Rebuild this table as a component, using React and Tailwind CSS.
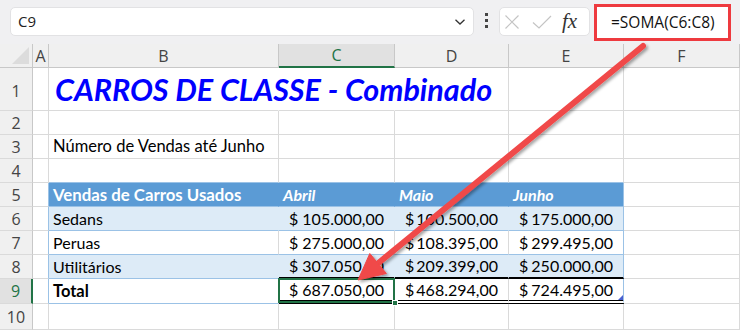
import React from "react";

const WA = "w-[16px]";
const WB = "w-[230px]";
const WC = "w-[116px]";
const WD = "w-[114px]";
const WE = "w-[115px]";
const WF = "w-[116px]";

function RowHead({ num, sel, tall }) {
  return (
    <div
      className={`w-[33px] shrink-0 h-full flex justify-center border-b border-[#dadada] font-['Open_Sans',sans-serif] text-[16px] ${
        tall ? "items-end pb-[7px]" : "items-center"
      } ${
        sel
          ? "bg-[#e1e1e1] text-[#217346] border-r-2 border-r-[#217346]"
          : "bg-[#f0f0f0] text-[#444] border-r border-r-[#c8c8c8]"
      }`}
    >
      {num}
    </div>
  );
}

function Money({ v, cls }) {
  return (
    <div className={`flex items-center justify-between pl-[10px] pr-[10px] h-full ${cls || ""}`}>
      <span>$</span>
      <span>{v}</span>
    </div>
  );
}

const cell = "shrink-0 h-full border-r border-b";

export default function App() {
  return (
    <div className="w-[740px] h-[330px] overflow-hidden relative bg-white font-['Lato',sans-serif] text-[16px] text-black">
      {/* toolbar */}
      <div className="h-[44px] bg-[#f0f0f2] flex items-start">
        <div className="ml-[10px] mt-[7px] w-[464px] h-[29px] bg-white rounded-[5px] border border-[#e2e2e4] flex items-center justify-between pl-[7px] pr-[7px] font-['Open_Sans',sans-serif] text-[15px] text-[#222]">
          <span>C9</span>
          <svg width="12" height="8" viewBox="0 0 12 8" fill="none" stroke="#333" strokeWidth="1.3">
            <path d="M1.5 1.8 L6 6 L10.5 1.8" />
          </svg>
        </div>
        <div className="ml-[11px] mt-[13px] flex flex-col gap-[3px]">
          <div className="w-[3px] h-[3px] bg-[#444]" />
          <div className="w-[3px] h-[3px] bg-[#444]" />
          <div className="w-[3px] h-[3px] bg-[#444]" />
        </div>
        <div className="ml-[11px] mt-[7px] w-[91px] h-[29px] bg-white rounded-[5px] border border-[#e2e2e4] flex items-center">
          <svg className="ml-[4px]" width="16" height="16" viewBox="0 0 16 16" fill="none" stroke="#c4c4c4" strokeWidth="1.2">
            <path d="M1.5 1.5 L14.5 14.5 M14.5 1.5 L1.5 14.5" />
          </svg>
          <svg className="ml-[12px]" width="20" height="16" viewBox="0 0 20 16" fill="none" stroke="#c4c4c4" strokeWidth="1.2">
            <path d="M1 8.5 L7 14 L19 2" />
          </svg>
          <span className="ml-[10px] font-['Liberation_Serif',serif] italic text-[21px] leading-none text-[#333]">fx</span>
        </div>
        <div className="ml-[4px] mt-[4px] w-[137px] h-[37px] border-[3px] border-[#ee3a3f] bg-white flex items-center pl-[14px] font-['Open_Sans',sans-serif] text-[15.5px] text-[#111]">
          =SOMA(C6:C8)
        </div>
      </div>

      {/* column header */}
      <div className="flex h-[24px] bg-[#f0f0f0] font-['Open_Sans',sans-serif] text-[16px] text-[#444]">
        <div className="w-[33px] shrink-0 h-full border-r border-b border-[#c8c8c8] flex items-end justify-end pr-[3px] pb-[3px]">
          <svg width="17" height="17" viewBox="0 0 17 17">
            <polygon points="17,0 17,17 0,17" fill="#dcdcdc" />
          </svg>
        </div>
        <div className={`${WA} shrink-0 h-full border-r border-b border-[#c8c8c8] flex items-center justify-center`}>A</div>
        <div className={`${WB} shrink-0 h-full border-r border-b border-[#c8c8c8] flex items-center justify-center`}>B</div>
        <div className={`${WC} shrink-0 h-full border-r border-[#c8c8c8] border-b-2 border-b-[#217346] bg-[#e1e1e1] text-[#217346] flex items-center justify-center`}>C</div>
        <div className={`${WD} shrink-0 h-full border-r border-b border-[#c8c8c8] flex items-center justify-center`}>D</div>
        <div className={`${WE} shrink-0 h-full border-r border-b border-[#c8c8c8] flex items-center justify-center`}>E</div>
        <div className={`${WF} shrink-0 h-full border-r border-b border-[#c8c8c8] flex items-center justify-center`}>F</div>
      </div>

      {/* row 1 */}
      <div className="flex h-[43px]">
        <RowHead num="1" tall />
        <div className={`${WA} ${cell} border-[#dadada]`} />
        <div className={`${WB} ${cell} border-b-[#dadada] border-r-transparent flex items-end pb-[3px] pl-[6px] overflow-visible`}>
          <span className="whitespace-nowrap font-bold italic text-[30.5px] leading-[36px] text-[#0000ff]">
            CARROS DE CLASSE - Combinado
          </span>
        </div>
        <div className={`${WC} ${cell} border-b-[#dadada] border-r-transparent`} />
        <div className={`${WD} ${cell} border-[#dadada]`} />
        <div className={`${WE} ${cell} border-[#dadada]`} />
        <div className={`${WF} ${cell} border-[#dadada]`} />
      </div>

      {/* row 2 */}
      <div className="flex h-[24px]">
        <RowHead num="2" />
        <div className={`${WA} ${cell} border-[#dadada]`} />
        <div className={`${WB} ${cell} border-[#dadada]`} />
        <div className={`${WC} ${cell} border-[#dadada]`} />
        <div className={`${WD} ${cell} border-[#dadada]`} />
        <div className={`${WE} ${cell} border-[#dadada]`} />
        <div className={`${WF} ${cell} border-[#dadada]`} />
      </div>

      {/* row 3 */}
      <div className="flex h-[24px]">
        <RowHead num="3" />
        <div className={`${WA} ${cell} border-[#dadada]`} />
        <div className={`${WB} ${cell} border-[#dadada] flex items-center pl-[4px] text-[16.5px]`}>Número de Vendas até Junho</div>
        <div className={`${WC} ${cell} border-[#dadada]`} />
        <div className={`${WD} ${cell} border-[#dadada]`} />
        <div className={`${WE} ${cell} border-[#dadada]`} />
        <div className={`${WF} ${cell} border-[#dadada]`} />
      </div>

      {/* row 4 */}
      <div className="flex h-[24px]">
        <RowHead num="4" />
        <div className={`${WA} ${cell} border-[#dadada]`} />
        <div className={`${WB} ${cell} border-r-[#dadada] border-b-[#9bc2e6]`} />
        <div className={`${WC} ${cell} border-r-[#dadada] border-b-[#9bc2e6]`} />
        <div className={`${WD} ${cell} border-r-[#dadada] border-b-[#9bc2e6]`} />
        <div className={`${WE} ${cell} border-r-[#dadada] border-b-[#9bc2e6]`} />
        <div className={`${WF} ${cell} border-[#dadada]`} />
      </div>

      {/* row 5 header */}
      <div className="flex h-[24px]">
        <RowHead num="5" />
        <div className={`${WA} ${cell} border-r-[#9bc2e6] border-b-[#dadada]`} />
        <div className={`${WB} ${cell} bg-[#5b9bd5] border-r-[#5b9bd5] border-b-[#9bc2e6] flex items-center pl-[4px] text-white font-bold text-[16.8px]`}>Vendas de Carros Usados</div>
        <div className={`${WC} ${cell} bg-[#5b9bd5] border-r-[#5b9bd5] border-b-[#9bc2e6] flex items-center pl-[4px] text-white font-bold italic`}>Abril</div>
        <div className={`${WD} ${cell} bg-[#5b9bd5] border-r-[#5b9bd5] border-b-[#9bc2e6] flex items-center pl-[4px] text-white font-bold italic`}>Maio</div>
        <div className={`${WE} ${cell} bg-[#5b9bd5] border-r-[#9bc2e6] border-b-[#9bc2e6] flex items-center pl-[4px] text-white font-bold italic`}>Junho</div>
        <div className={`${WF} ${cell} border-[#dadada]`} />
      </div>

      {/* row 6 */}
      <div className="flex h-[24px]">
        <RowHead num="6" />
        <div className={`${WA} ${cell} border-r-[#9bc2e6] border-b-[#dadada]`} />
        <div className={`${WB} ${cell} bg-[#ddebf7] border-r-[#ddebf7] border-b-[#9bc2e6] flex items-center pl-[4px]`}>Sedans</div>
        <div className={`${WC} ${cell} bg-[#ddebf7] border-r-[#ddebf7] border-b-[#9bc2e6]`}><Money v="105.000,00" /></div>
        <div className={`${WD} ${cell} bg-[#ddebf7] border-r-[#ddebf7] border-b-[#9bc2e6]`}><Money v="100.500,00" /></div>
        <div className={`${WE} ${cell} bg-[#ddebf7] border-r-[#9bc2e6] border-b-[#9bc2e6]`}><Money v="175.000,00" /></div>
        <div className={`${WF} ${cell} border-[#dadada]`} />
      </div>

      {/* row 7 */}
      <div className="flex h-[24px]">
        <RowHead num="7" />
        <div className={`${WA} ${cell} border-r-[#9bc2e6] border-b-[#dadada]`} />
        <div className={`${WB} ${cell} border-r-[#dadada] border-b-[#9bc2e6] flex items-center pl-[4px]`}>Peruas</div>
        <div className={`${WC} ${cell} border-r-[#dadada] border-b-[#9bc2e6]`}><Money v="275.000,00" /></div>
        <div className={`${WD} ${cell} border-r-[#dadada] border-b-[#9bc2e6]`}><Money v="108.395,00" /></div>
        <div className={`${WE} ${cell} border-r-[#9bc2e6] border-b-[#9bc2e6]`}><Money v="299.495,00" /></div>
        <div className={`${WF} ${cell} border-[#dadada]`} />
      </div>

      {/* row 8 */}
      <div className="flex h-[24px]">
        <RowHead num="8" />
        <div className={`${WA} ${cell} border-r-[#9bc2e6] border-b-[#dadada]`} />
        <div className={`${WB} ${cell} bg-[#ddebf7] border-r-[#ddebf7] border-b-[#9bc2e6] flex items-center pl-[4px]`}>Utilitários</div>
        <div className={`${WC} shrink-0 h-full border-r border-r-[#ddebf7] border-b-2 border-b-black bg-[#ddebf7]`}><Money v="307.050,00" /></div>
        <div className={`${WD} shrink-0 h-full border-r border-r-[#ddebf7] border-b-2 border-b-black bg-[#ddebf7]`}><Money v="209.399,00" /></div>
        <div className={`${WE} shrink-0 h-full border-r border-r-[#9bc2e6] border-b-2 border-b-black bg-[#ddebf7]`}><Money v="250.000,00" /></div>
        <div className={`${WF} ${cell} border-[#dadada]`} />
      </div>

      {/* row 9 */}
      <div className="flex h-[25px]">
        <RowHead num="9" sel />
        <div className={`${WA} ${cell} border-r-[#9bc2e6] border-b-[#dadada]`} />
        <div className={`${WB} ${cell} border-r-[#dadada] border-b-[#9bc2e6] flex items-center pl-[4px] font-bold text-[16.5px]`}>Total</div>
        <div className={`${WC} shrink-0 h-full border-r border-r-[#dadada] border-b-4 border-b-black border-double relative`}>
          <Money v="687.050,00" />
          <div className="absolute -top-[1px] -left-[1px] -right-[1px] -bottom-[3px] border-2 border-[#217346]" />
          <div className="absolute -right-[4px] -bottom-[6px] w-[6px] h-[6px] bg-[#217346] border border-white" />
        </div>
        <div className={`${WD} shrink-0 h-full border-r border-r-[#dadada] border-b-4 border-b-black border-double`}><Money v="468.294,00" /></div>
        <div className={`${WE} shrink-0 h-full border-r border-r-[#9bc2e6] border-b-4 border-b-black border-double relative`}>
          <Money v="724.495,00" />
          <svg className="absolute right-0 bottom-0" width="5" height="5" viewBox="0 0 5 5">
            <polygon points="5,0 5,5 0,5" fill="#4a5fd0" />
          </svg>
        </div>
        <div className={`${WF} ${cell} border-[#dadada]`} />
      </div>

      {/* row 10 */}
      <div className="flex h-[26px]">
        <RowHead num="10" />
        <div className={`${WA} ${cell} border-[#dadada]`} />
        <div className={`${WB} ${cell} border-[#dadada]`} />
        <div className={`${WC} ${cell} border-[#dadada]`} />
        <div className={`${WD} ${cell} border-[#dadada]`} />
        <div className={`${WE} ${cell} border-[#dadada]`} />
        <div className={`${WF} ${cell} border-[#dadada]`} />
      </div>

      {/* arrow */}
      <svg className="absolute inset-0 pointer-events-none" width="740" height="330" viewBox="0 0 740 330">
        <defs>
          <filter id="sh" x="-20%" y="-20%" width="140%" height="140%">
            <feDropShadow dx="2" dy="2" stdDeviation="1.5" floodColor="#000" floodOpacity="0.35" />
          </filter>
        </defs>
        <g filter="url(#sh)">
          <line x1="643" y1="46" x2="379" y2="262.5" stroke="#f04848" strokeWidth="6" strokeLinecap="round" />
          <polygon points="358,280 369.8,253.5 386.4,273.5" fill="#f04848" stroke="#f04848" strokeWidth="1" strokeLinejoin="round" />
        </g>
      </svg>
    </div>
  );
}
